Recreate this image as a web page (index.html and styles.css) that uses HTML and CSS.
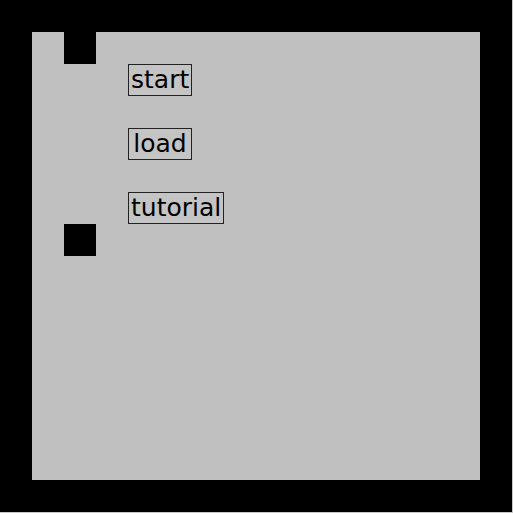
FILE: index.html
```html
<!DOCTYPE html>
<html lang="en">
<head>
    <meta charset="UTF-8">
    <meta name="viewport" content="width=device-width, initial-scale=1.0">
    <title>Menu</title>
    <link rel="stylesheet" href="styles.css">
</head>
<body>
    <div class="screen">
        <div class="board">
            <div class="block block-top"></div>
            <button class="menu-btn btn-start">start</button>
            <button class="menu-btn btn-load">load</button>
            <button class="menu-btn btn-tutorial">tutorial</button>
            <div class="block block-bottom"></div>
        </div>
    </div>
</body>
</html>
```

FILE: styles.css
```css
* {
    margin: 0;
    padding: 0;
    box-sizing: border-box;
}

body {
    background-color: #c8c8c8;
    font-family: "DejaVu Sans", sans-serif;
}

/* 512x512 black screen with a 32px frame */
.screen {
    width: 512px;
    height: 512px;
    background: #000;
    padding: 32px;
}

/* play area laid out on a 32px tile grid */
.board {
    width: 448px;
    height: 448px;
    background: #c0c0c0;
    display: grid;
    grid-template-columns: repeat(14, 32px);
    grid-template-rows: repeat(14, 32px);
}

.block {
    background: #000;
    grid-column: 2;
}

.block-top {
    grid-row: 1;
}

.block-bottom {
    grid-row: 7;
}

.menu-btn {
    grid-column: 4 / span 4;
    justify-self: start;
    min-width: 64px;
    height: 32px;
    padding: 0 2px;
    border: 1px solid #222;
    background: #c4c4c4;
    color: #000;
    font-family: "DejaVu Sans", sans-serif;
    font-size: 25px;
    line-height: 30px;
    text-align: center;
    cursor: pointer;
}

.btn-start {
    grid-row: 2;
}

.btn-load {
    grid-row: 4;
}

.btn-tutorial {
    grid-row: 6;
}
```
